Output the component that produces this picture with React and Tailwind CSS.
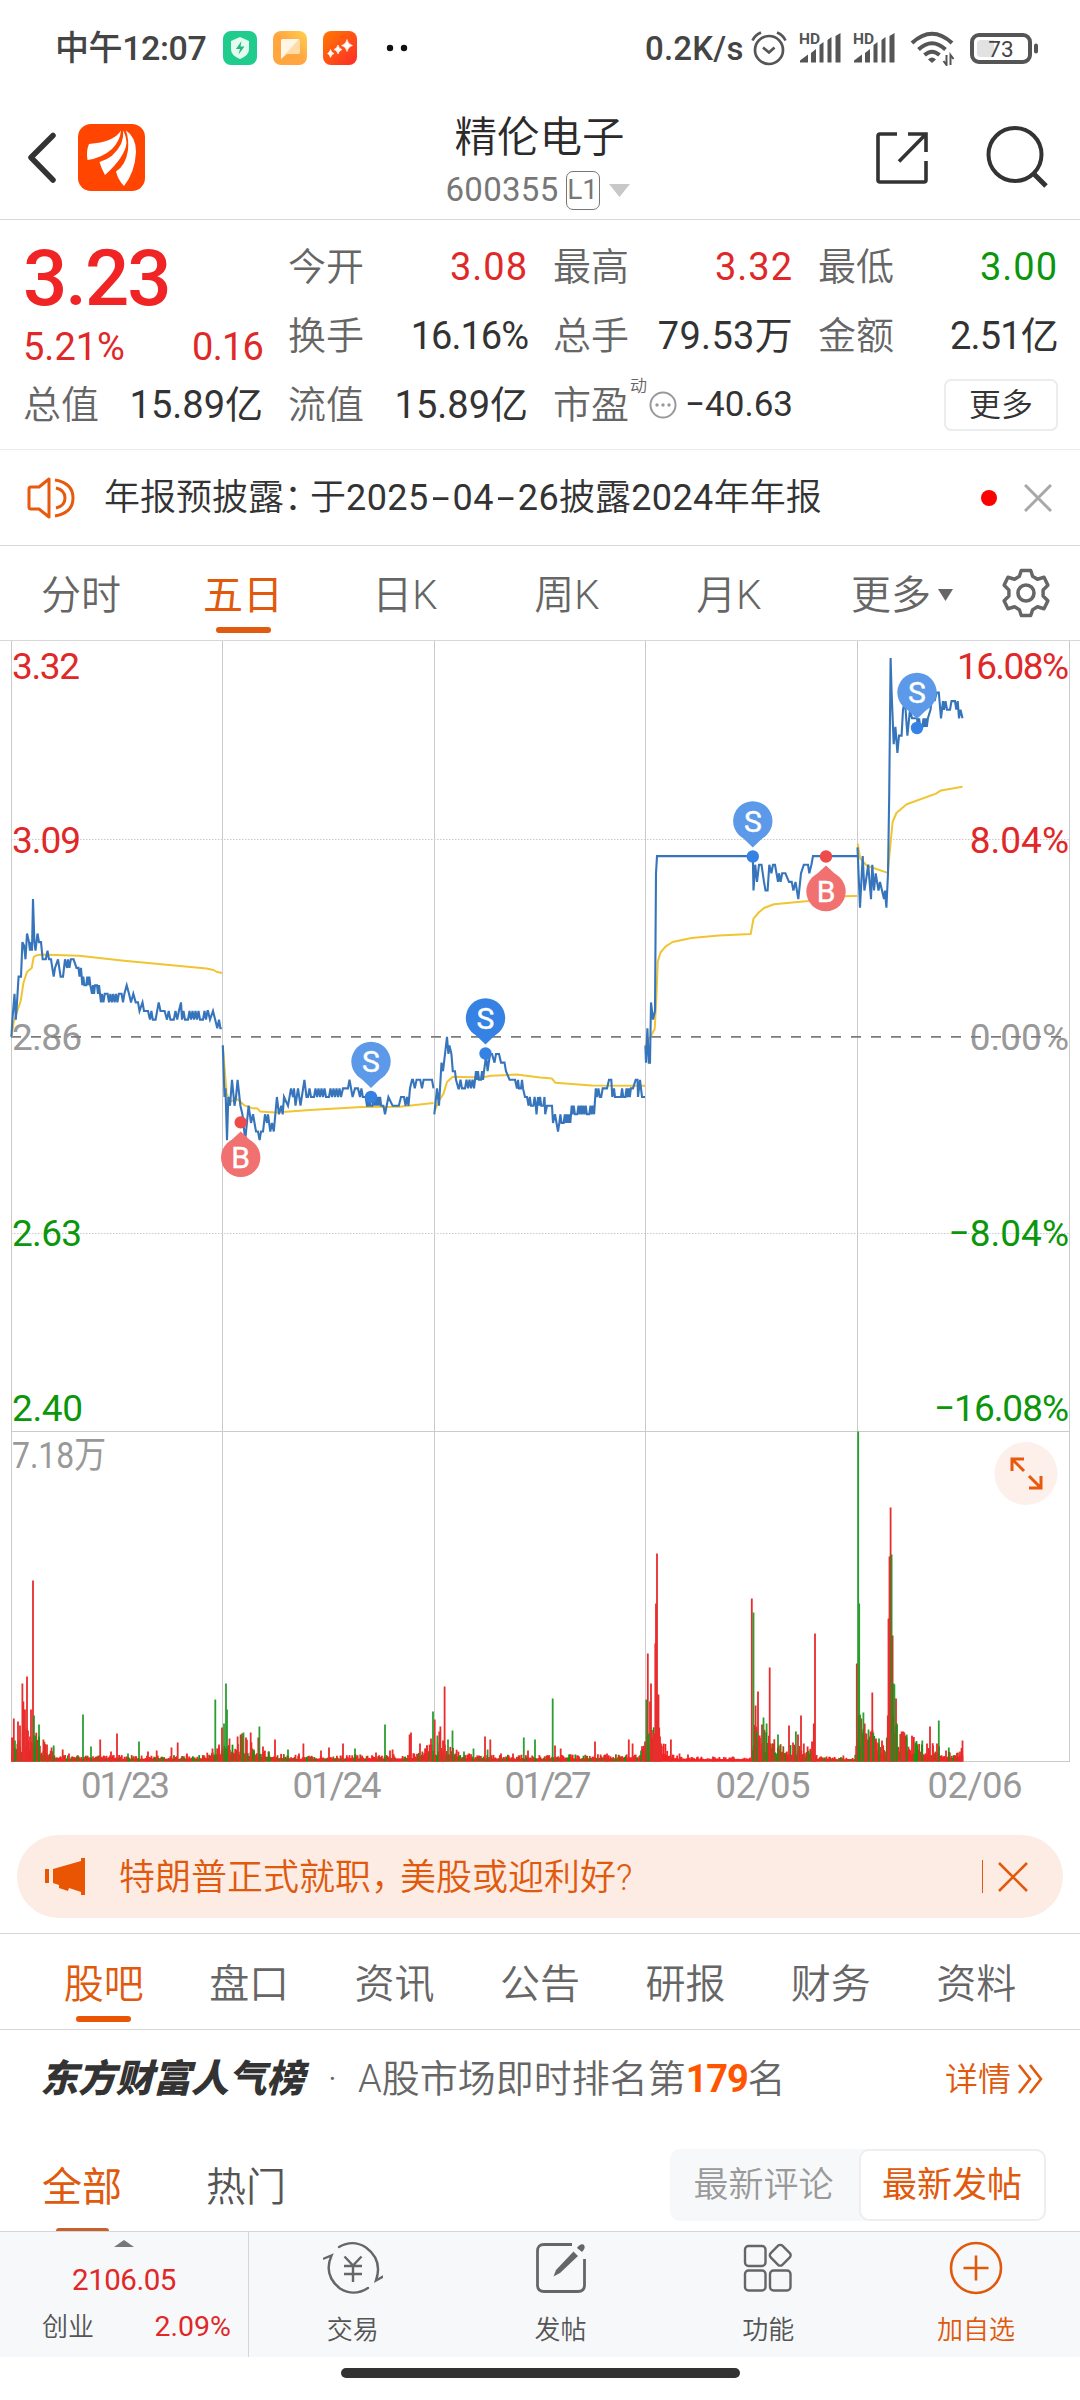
import React from "react";

const RED = "#e02828";
const GREEN = "#0b960b";
const ORANGE = "#e8590c";

const ZERO_Y = 396.8; // y of 2.86
const TICK = 8.607; // height of 0.01
const VOL_BASE = 1121.5;

// A span of fast flicker between two price ticks
const osc = (from, to, a, b, step = 1.4) => {
    const points = [];
    for (let x = from, i = 0; x <= to; x += step, i++) {
        points.push([x, i % 5 === 3 ? a : i % 2 ? b : a]);
    }
    return points;
};

// [x, ticks from 2.86]
const priceDays = [
    [
        [11.4, 0], [12.4, 2], [14.5, 5], [15.8, 2], [17, 4], [18.6, 7], [21, 7], [22.4, 11], [24, 10.6], [25.5, 9],
        [27, 12], [29, 11], [30, 10], [31.3, 11], [32, 10], [33, 16], [34.4, 11], [35.5, 10], [37.5, 12], [39, 11],
        [41, 11], [42.7, 9], [45.8, 9], [47.5, 10], [49, 9], [51, 9], [52.3, 8], [53.7, 7], [55, 8], [58, 9],
        [60.6, 7], [63, 7], [65, 9], [67, 8], ...osc(68, 75, 9, 8), [76.5, 8], [78.5, 8], [79.5, 7], [81, 8],
        ...osc(82.3, 90.5, 6, 7, 1), [92, 5], ...osc(93, 99.5, 6, 5, 1), [101, 4], ...osc(102, 125, 5, 4), [126.7, 6],
        [129, 5], [131, 4], [133.3, 5], [135.7, 4], [138, 4], [139.5, 3], [142.5, 4], [144, 3], [148, 3],
        ...osc(150, 156, 2, 3), [158.7, 4], [160.5, 3], [164.6, 3], ...osc(167, 180, 2, 3, 1.7), [181, 4],
        ...osc(182, 208, 2, 3, 1.5), [208, 3], [210, 2], [213, 3], [217.3, 1], [219, 2], [220.4, 1], [221.8, 1],
    ],
    [
        [222.8, -1], [224.5, -7], [225.5, -6], [227, -12], [228.3, -7], [230, -8], [232, -5], [234.5, -8],
        [236, -7], [237.6, -5], [240.4, -8], [242.4, -9], [245.2, -12], [248.6, -8], [251, -10], [253, -9],
        [256, -11], [258, -11], [259.6, -12], [261, -11], [263, -11], [265, -9], [267, -10], [268, -9],
        [270.3, -11], [272, -10], [273.8, -11], [276.9, -7], [279, -9], [281.3, -8], [282.7, -9], [284, -7],
        [288, -8], [291, -6], [293, -7], [294, -6], [295.5, -8], [298, -6], [300.5, -8], [304.4, -5], [306.5, -7],
        ...osc(308, 342, -7, -6, 1.5), [343, -6], [348, -6], [349.5, -5], [352.6, -7], [355, -6], [358, -6],
        ...osc(360, 366, -7, -6), [367, -8], ...osc(368, 384, -8, -7, 1.1), [385, -9], [388.4, -7], [392.6, -8],
        [398.8, -8], [401, -7], [404, -7], [405.6, -8], [407, -7], [408.5, -8], [410, -6], [412, -5],
        ...osc(413, 423, -5, -6, 1.8), [423.6, -5], [432, -5], [433.5, -6],
    ],
    [
        [434.3, -9], [437, -6], [439, -8], [441.5, -3], [443, -4], [445, -2], [447, 0], [448.4, -2], [449.4, -1],
        [451.4, -2], [452.8, -4], [455, -4], [456, -5], [458.4, -6], ...osc(459, 475, -6, -5, 1.5), [476, -4],
        ...osc(477, 484, -5, -4, 1), [485.2, -3], [486, -2], [487.6, -4], [490, -2], [492, -2], [494.5, -3],
        [496, -2], [499, -2], [501, -3], [503, -3], [504.5, -3], [506, -4], [509.6, -5], [515, -5],
        ...osc(517, 523, -6, -5, 1), [525, -7], [527, -7], ...osc(528.6, 536, -8, -7, 1.2), [536.5, -9], [538, -7],
        ...osc(539, 545, -8, -7, 1.1), [545.2, -9], [547, -8], [552, -8], [553, -10], [555, -9], [558, -11],
        ...osc(559.3, 571, -10, -9, 1.1), [571.7, -8], ...osc(572.5, 594.5, -9, -8, 1.2), [595.8, -6],
        ...osc(597, 602, -7, -6), [602.7, -6], [607, -6], [609, -5], [611.3, -5], [612.3, -7], [614, -6],
        [615, -7], [620, -7], ...osc(621, 632, -7, -6, 1.1), [633, -6], [635.7, -5], [637.5, -5], [638, -7],
        [640, -5], [642, -7], [645, -7],
    ],
    [
        [645.4, -1], [646, -3], [647.4, 1], [648.8, -3], [650, -3], [651, 4], [653, 2], [655, 3], [656, 19],
        [657, 21], [752.8, 21], [753.5, 17], [755.2, 20], [757, 18], [759, 20], [761.5, 20], [764, 18],
        [765.5, 17], [767.6, 17], [769.3, 20], [771.4, 19], [773, 20], [775, 20], [778, 18],
        ...osc(779, 787, 19, 18, 1.6), [789, 18], [791.7, 18], [793.4, 17], [795.5, 18], [798.3, 16], [801, 19],
        [803.8, 20], [808, 20], [809.3, 19], [811.4, 20], [813, 21], [857, 21],
    ],
    [
        [857.5, 22], [860, 15], [862.7, 21], [864.4, 17], [865.8, 18], [868.2, 20], [871, 16], [872.3, 20],
        [874, 17], [875.7, 19], [878.5, 17], [880, 18], [882, 17], [884, 16], [885, 17], [886.4, 15], [888, 19],
        [889.2, 28], [890.6, 44], [891.6, 40], [893.7, 34], [895.4, 36], [897.4, 33], [899, 35], [901.6, 35],
        [903, 38], [905, 39], [907.4, 35], [910, 38], [912, 37], [917, 37], ...osc(918, 928, 36, 37, 1.1),
        [930.5, 38], [932.6, 40], [934.6, 39], [936.7, 40], [938.8, 40], [941, 37], [943, 39],
        ...osc(944, 952, 38, 39, 1.5), [955, 39], [956.3, 38], [957.7, 39], [959, 37], [960.5, 38], [962.5, 37],
    ],
];

const averages = [
    "11.4,396.8 13.8,382 17,372 20.7,361 23.4,343 27,332 31.7,328 33.7,317 36,315.5 41.3,314.5 79,315.7 124,320.7 206.6,328.6 213.5,330 217,332 222,333",
    "222.8,405 226.6,453.6 230,461.4 237.6,459.3 244.5,465.4 251.4,467.9 257.6,468.6 260,471.4 275.5,472.5 310,470 361.6,467 399.4,466.8 433.5,463",
    "434.6,471 439,460.7 443.5,453.6 447,442 452.8,436.8 482,437.5 490.7,435.7 516.5,434.6 540,437.5 552,438.6 555.5,442.8 591.6,445.4 645,445.7",
    "645.5,405 651,395.7 654.7,389 656.4,357 657.8,321.4 660.5,312.5 665.7,306.4 672.6,302 691.5,298 719,295.4 750.7,294 753.5,278.6 758.7,272.5 764,268 774,264.3 808.6,261 819,256.4 857,256",
    "857.8,203.6 860.2,218.6 867,225.7 887.8,232.9 889.5,214 892.6,182 896.4,173 906.7,164.3 936,153.6 941,150.4 962.5,146.8",
];

const redBars = [
    [12, 24], [13.8, 43], [18, 40], [20, 36], [22.4, 78], [23.4, 60], [25, 52], [27, 85], [28, 31], [31, 52],
    [33, 181], [43.4, 22], [47, 17], [51.6, 14], [62.7, 12], [69, 8], [100.2, 22], [111, 10], [117, 28], [148, 10],
    [156.7, 11], [171.5, 14], [177.7, 19], [187, 8], [212.5, 13], [219, 17], [222, 34], [229.5, 23], [237.6, 25],
    [242, 28], [246, 24], [250.7, 29], [258.3, 24], [263, 15], [275, 22], [299, 8], [303.4, 18], [321, 11],
    [329, 14], [343, 18], [376, 9], [390, 11], [392.6, 12], [409.6, 27], [411, 29], [420, 18], [427, 16],
    [431, 23], [434.7, 42], [439.3, 30], [440.4, 35], [443, 21], [444.6, 75], [485, 25], [490.3, 22], [501, 8],
    [513, 8], [528, 11], [555, 16], [560.7, 13], [595, 20], [607, 8], [628.8, 22], [632.6, 18], [645, 20],
    [647.8, 108], [650, 60], [651, 78], [653.6, 28], [655.3, 118], [656, 158], [657, 208], [658.5, 67],
    [659.2, 34], [660, 25], [661, 18], [670.9, 22], [679.5, 8], [688, 7], [713, 5], [733, 5], [751.8, 163],
    [755.6, 56], [758, 70], [759.7, 26], [762, 37], [769.7, 94], [789, 36], [793, 19], [798, 27], [801, 46],
    [803.8, 18], [812, 20], [813.8, 38], [815, 128], [826.5, 5], [843.4, 6], [856.8, 98], [861.3, 43],
    [864.7, 38], [866.4, 28], [870.6, 30], [872.3, 69], [876, 23], [882, 21], [887.8, 46], [888.5, 143],
    [889.5, 205], [890.6, 254], [892.6, 126], [896, 63], [901.6, 30], [903.3, 30], [904.3, 29], [927, 18],
    [930, 35], [933, 16], [937, 18], [946, 11], [960, 10], [962.5, 21],
];

const greenBars = [
    [15, 21], [34, 46], [35.5, 26], [39, 37], [53.7, 16], [83, 47], [91, 15], [128, 8], [139, 20], [215.3, 62],
    [224, 38], [226, 78], [227, 52], [243.5, 29], [254, 12], [259.4, 35], [269, 10], [288, 12], [355, 13],
    [385, 37], [433, 50], [437.4, 26], [448, 22], [452.5, 31], [464, 10], [473.5, 13], [487.6, 12], [523.8, 24],
    [535, 22], [552.7, 63], [641, 11], [646.4, 62], [648.8, 28], [753.5, 149], [756.6, 30], [763.5, 44],
    [766.6, 38], [778, 27], [795.9, 30], [858.2, 330], [859.2, 158], [860.2, 47], [863.4, 49], [868.5, 32],
    [873.3, 29], [879, 23], [891.6, 207], [893.7, 78], [894.4, 77], [897, 38], [906.7, 27], [915.4, 19],
    [922.3, 21], [938.8, 41], [948.8, 14],
];

// Upper bound of the small bars along the day
const envelope = [
    [12, 18], [20, 28], [30, 28], [40, 18], [50, 11], [60, 6], [75, 4], [200, 4], [212, 9], [222, 15], [235, 24],
    [250, 15], [265, 9], [280, 6], [300, 4], [405, 5], [420, 9], [434, 16], [450, 18], [458, 7], [480, 4],
    [625, 5], [640, 9], [650, 28], [660, 28], [666, 12], [672, 5], [680, 3], [751, 2], [753, 30], [765, 30],
    [775, 17], [790, 12], [805, 13], [815, 11], [817, 3], [855, 2], [858, 36], [870, 28], [886, 16], [889, 44],
    [898, 28], [910, 22], [925, 16], [940, 13], [945, 7], [963, 10],
];

const envelopeAt = (x) => {
    for (let i = 1; i < envelope.length; i++) {
        const [x1, h1] = envelope[i];
        if (x <= x1) {
            const [x0, h0] = envelope[i - 1];
            return h0 + ((h1 - h0) * (x - x0)) / (x1 - x0);
        }
    }
    return 0;
};

const smallBars = [];
for (let i = 0, x = 12; x < 963; i++, x += 0.9) {
    const noise = Math.abs(Math.sin(i * 12.9898) * 43758.5453) % 1;
    const pick = Math.abs(Math.sin(i * 4.137) * 9631.17) % 1;
    const onlyRed = x > 658 && x < 751;
    const color = onlyRed || pick < 0.66 ? "#f42323" : pick < 0.8 ? "#0a9a0a" : "#8a5a12";
    smallBars.push({ x, h: 1.5 + noise * noise * envelopeAt(x) + envelopeAt(x) * 0.26, color });
}

const barsPath = (bars) => bars.map(([x, h]) => `M${x} ${VOL_BASE}v${-h}`).join("");
const toPoints = (day) => day.map(([x, t]) => `${x.toFixed(1)},${(ZERO_Y - t * TICK).toFixed(1)}`).join(" ");

const trades = [
    { type: "B", x: 240.7, y: 482.4 },
    { type: "S", x: 371, y: 457, faded: true },
    { type: "S", x: 485.5, y: 413.5 },
    { type: "S", x: 752.8, y: 216.5, faded: true },
    { type: "B", x: 826, y: 216.5 },
    { type: "S", x: 917, y: 88, faded: true },
];

const Marker = ({ type, x, y, faded }) => {
    const sell = type === "S";
    const cy = sell ? y - 35.5 : y + 35;
    const tip = sell ? y - 9 : y + 9;
    const side = sell ? cy + 13 : cy - 13;
    const fill = sell ? (faded ? "#5c99e8" : "#3682e4") : "#f17070";
    return (
        <g>
            <circle cx={x} cy={y} r="6.2" fill={sell ? "#3682e4" : "#ee4b4b"} />
            <path d={`M${x - 14} ${side}L${x} ${tip}L${x + 14} ${side}Z`} fill={fill} />
            <circle cx={x} cy={cy} r="19.7" fill={fill} />
            <text x={x} y={cy + 10.5} textAnchor="middle" fontSize="30" fontWeight="400" stroke="#fff" strokeWidth="0.4" fill="#fff">{type}</text>
        </g>
    );
};

const StockChart = () => (
    <svg className="-mt-px block font-normal" width="1080" height="1172" viewBox="0 0 1080 1172">
        <g stroke="#cbcbcb" strokeWidth="1" fill="none">
            <path d="M11.5 1V1121M222.5 1V1121M434.5 1V1121M645.5 1V1121M857.5 1V1121M1069.5 1V1121" />
            <path d="M11 791.5H1070M11 1121.5H1070" />
            <path d="M11 199.5H1070M11 593.5H1070" strokeDasharray="1.5 1.5" />
        </g>

        {smallBars.map((b, i) => (
            <rect key={i} x={b.x - 0.9} y={VOL_BASE - b.h} width="1.8" height={b.h} fill={b.color} />
        ))}
        <path d={barsPath(redBars)} stroke="#e92c2c" strokeWidth="1.8" />
        <path d={barsPath(greenBars)} stroke="#14931a" strokeWidth="1.8" strokeOpacity="0.9" />

        <g fontSize="37">
            <text x="12" y="39" textLength="68" fill={RED}>3.32</text>
            <text x="12" y="213" textLength="69" fill={RED}>3.09</text>
            <text x="12" y="410" textLength="70" fill="#999">2.86</text>
            <text x="12" y="606" textLength="70" fill={GREEN}>2.63</text>
            <text x="12" y="781" textLength="71" fill={GREEN}>2.40</text>
            <text x="12" y="828" textLength="94" lengthAdjust="spacingAndGlyphs" fill="#999">7.18万</text>
        </g>
        <g fontSize="37" textAnchor="end">
            <text x="1069" y="39" textLength="112" fill={RED}>16.08%</text>
            <text x="1069" y="213" fill={RED}>8.04%</text>
            <text x="1069" y="410" fill="#999">0.00%</text>
            <text x="1069" y="606" fill={GREEN}>−8.04%</text>
            <text x="1069" y="781" textLength="135" fill={GREEN}>−16.08%</text>
        </g>
        <path d={`M11 ${ZERO_Y}H1070`} stroke="#7c7c7c" strokeWidth="1.7" strokeDasharray="10 10" />

        {averages.map((points, i) => (
            <polyline key={i} points={points} fill="none" stroke="#f0c531" strokeWidth="2" strokeLinejoin="round" />
        ))}
        {priceDays.map((day, i) => (
            <polyline key={i} points={toPoints(day)} fill="none" stroke="#3674bb" strokeWidth="2.1" />
        ))}
        {trades.map((t, i) => <Marker key={i} {...t} />)}

        <circle cx="1026" cy="833.5" r="31.5" fill="#fdf0ea" />
        <path d="M1012 831v-12h12M1013 820l11 11M1041 836v12h-12M1040 847l-11-11" fill="none" stroke={ORANGE} strokeWidth="3" />

        <g fontSize="36.5" fill="#999" textAnchor="middle">
            <text x="125.5" y="1158" textLength="89">01/23</text>
            <text x="337" y="1158" textLength="89">01/24</text>
            <text x="548" y="1158" textLength="87">01/27</text>
            <text x="763" y="1158" textLength="95">02/05</text>
            <text x="975" y="1158" textLength="95">02/06</text>
        </g>
    </svg>
);

const Signal = () => (
    <svg width="43" height="44" viewBox="0 -5 43 44" fill="#555">
        <text x="0" y="13" fontSize="15.500" fontWeight="700">HD</text>
        <path d="M1 31.500v-2l8-6v8zM12 31.500V22l5-4v13.500zM20.500 31.500V14l4-3v20.500zM28.500 31.500V9l4-3v25.500zM36.500 31.500V5l5-3v29.500z" />
    </svg>
);

const StatusBar = () => (
    <div className="flex h-24 items-center pr-[41px] pl-[55px] text-[#444]">
        <span className="w-[153px] text-[34px] leading-none font-medium tracking-[-0.4px] whitespace-nowrap">中午12:07</span>
        <svg className="ml-[15px]" width="185" height="34" viewBox="0 0 185 34">
            <defs>
                <linearGradient id="note" x1="0" y1="1" x2="1" y2="0">
                    <stop offset="0.5" stopColor="#ffa640" />
                    <stop offset="1" stopColor="#ffd050" />
                </linearGradient>
                <linearGradient id="spark" x1="0" y1="0" x2="1" y2="1">
                    <stop offset="0" stopColor="#ff7a00" />
                    <stop offset="1" stopColor="#ff2a2a" />
                </linearGradient>
            </defs>
            <rect width="34" height="34" rx="8" fill="#1fcc8d" />
            <path d="M17 6l9 4v8c0 5-4 8-9 10-5-2-9-5-9-10v-8z" fill="#e4fbf0" />
            <path d="M18.500 10l-5.500 8h4l-1.500 5.500 6-8h-4z" fill="#1fb880" />
            <rect x="50" width="34" height="34" rx="8" fill="url(#note)" />
            <path d="M58 28V10q0-2 2-2h15q2 0 2 2v11q0 2-2 2H64z" fill="#ffdca8" />
            <path d="M58 28V10q0-2 2-2h16z" fill="#fff6e6" />
            <rect x="100" width="34" height="34" rx="8" fill="url(#spark)" />
            <path d="M124 8.500q1 5 5.500 6-4.500 1-5.500 6-1-5-5.500-6 4.500-1 5.500-6zM115 14q1 4 4 4.500-3 1-4 4.500-1-4-4-4.500 3-1 4-4.500zM107.500 18.500q1 3.500 3.500 4-2.500.5-3.500 4-1-3.500-3-4 2-.5 3-4z" fill="#fff" stroke="#fff" strokeWidth="0.6" />
            <circle cx="167" cy="17" r="3.200" fill="#111" />
            <circle cx="181" cy="17" r="3.200" fill="#111" />
        </svg>
        <span className="ml-auto w-[99px] text-[33px] leading-none font-medium tracking-[0.2px] whitespace-nowrap">0.2K/s</span>
        <svg className="ml-[7px]" width="36" height="36" viewBox="0 0 36 36" fill="none" stroke="#555" strokeWidth="2.700">
            <circle cx="18" cy="20" r="14" />
            <path d="M12 17.500l6 5 5.500-5M1.500 10.500Q4 5 10 2.500M34.500 10.500Q32 5 26 2.500" />
        </svg>
        <div className="ml-[12px]"><Signal /></div>
        <div className="ml-[11px]"><Signal /></div>
        <svg className="ml-[14px]" width="44" height="35" viewBox="0 0 44 35" fill="none" stroke="#555" strokeWidth="4">
            <path d="M2 12Q22-6.500 42 12M8.500 18.500Q22 6 35.500 18.500M14.500 24Q22 17.500 29.500 24" />
            <path d="M22 32l-4-3.500q4-4 8 0z" fill="#555" stroke="none" />
            <path d="M36.500 24v10l-3-4M40.500 34V24l3 4" strokeWidth="2" />
        </svg>
        <svg className="ml-[16px]" width="69" height="31" viewBox="0 0 69 31">
            <rect x="2" y="2" width="58" height="27" rx="7" fill="#fff" stroke="#555" strokeWidth="4" />
            <path d="M11 7h13v17H11q-4 0-4-4v-9q0-4 4-4z" fill="#e2e2e2" />
            <rect x="64" y="10.500" width="4" height="10" rx="2" fill="#555" />
            <text x="31" y="23.500" textAnchor="middle" fontSize="22.500" fontWeight="400" fill="#444">73</text>
        </svg>
    </div>
);

const Header = () => (
    <div className="flex h-[124px] items-start justify-between border-b border-[#d8d8d8] pr-[31px] pl-[26px]">
        <div className="mt-[28px] flex items-center">
            <svg width="32" height="54" viewBox="0 0 32 54" fill="none" stroke="#333" strokeWidth="5.500" strokeLinecap="round" strokeLinejoin="round">
                <path d="M27 4.500L5 26.500 27 49" />
            </svg>
            <svg className="ml-[20px]" width="67" height="67" viewBox="0 0 67 67">
                <rect width="67" height="67" rx="13" fill="#ff4500" />
                <path d="M43 6.500Q36 18 11 20Q8 27 9.500 36Q24 34 34 25Q42 17 43 6.500zM45 6.500Q48 11 48.500 19Q47 33 27 51Q23 44 21.500 38Q36 34 43 20Q46 12 45 6.500zM48 6.500Q58 13 58 28Q57 48 46 62Q40 56 38 47.500Q48 41 50 26Q51 15 48 6.500z" fill="#fff" />
            </svg>
        </div>
        <div className="ml-[58px] flex flex-col items-center">
            <div className="mt-[20px] text-[42.500px] leading-[44px] text-[#2b2b2b]">精伦电子</div>
            <div className="mt-[10px] -ml-[4px] flex items-center text-[33px] leading-[40px] font-normal text-[#777]">
                <span className="tracking-[0.3px]">600355</span>
                <span className="ml-[7px] flex h-[39px] w-[34px] items-center justify-center rounded-[7px] border-[1.5px] border-[#777] text-[28px]">L1</span>
                <svg className="ml-[9px]" width="21" height="13" viewBox="0 0 21 13"><path d="M0 0h21L10.500 13z" fill="#c8c8c8" /></svg>
            </div>
        </div>
        <div className="mt-[29px] flex">
            <svg className="mt-[7px]" width="52" height="52" viewBox="0 0 52 52" fill="none" stroke="#333" strokeWidth="3.600">
                <path d="M21 2H4Q2 2 2 4v44q0 2 2 2h44q2 0 2-2V29M32 2h18v18M49 3L23 29.500" />
            </svg>
            <svg className="ml-[58px]" width="63" height="63" viewBox="0 0 63 63" fill="none" stroke="#333" strokeWidth="4">
                <circle cx="29" cy="29.500" r="26.500" />
                <path d="M47.500 48.500L60 61" strokeWidth="5" />
            </svg>
        </div>
    </div>
);

const Quote = ({ label, value, color = "text-[#333]" }) => (
    <div className="flex items-center justify-between text-[38px] leading-none whitespace-nowrap">
        <span className="text-[#666]">{label}</span>
        <span className={`font-normal ${color}`}>{value}</span>
    </div>
);

const QuotePanel = () => (
    <div className="h-[230px] border-b border-[#ebebeb] pt-[12px] pr-[22px] pl-[23px]">
        <div className="grid auto-rows-[69px] grid-cols-4 gap-x-[25px]">
            <div className="flex items-center pt-[24px] text-[78px] leading-none font-medium tracking-[-2px] text-[#f02424]">3.23</div>
            <Quote label="今开" value="3.08" color="tracking-[1px] text-[#e02828]" />
            <Quote label="最高" value="3.32" color="tracking-[1px] text-[#e02828]" />
            <Quote label="最低" value="3.00" color="tracking-[1px] text-[#0b960b]" />

            <div className="flex items-center justify-between pt-[22px] text-[38px] leading-none font-normal text-[#e02828]">
                <span>5.21%</span>
                <span className="tracking-[-0.8px]">0.16</span>
            </div>
            <Quote label="换手" value="16.16%" color="tracking-[-1px] text-[#333]" />
            <Quote label="总手" value="79.53万" color="tracking-[0.3px] text-[#333]" />
            <Quote label="金额" value="2.51亿" color="tracking-[-0.8px] text-[#333]" />

            <Quote label="总值" value="15.89亿" />
            <Quote label="流值" value="15.89亿" />
            <div className="flex items-center text-[38px] leading-none whitespace-nowrap">
                <span className="text-[#666]">市盈</span>
                <span className="mb-[36px] ml-[1px] text-[17px] text-[#666]">动</span>
                <svg className="ml-[2px]" width="28" height="28" viewBox="0 0 28 28" fill="#999">
                    <circle cx="14" cy="14" r="12.500" fill="none" stroke="#999" strokeWidth="2" />
                    <circle cx="8" cy="14" r="1.700" /><circle cx="14" cy="14" r="1.700" /><circle cx="20" cy="14" r="1.700" />
                </svg>
                <span className="ml-auto text-[35px] font-normal text-[#333]">−40.63</span>
            </div>
            <div className="flex items-center justify-end">
                <button className="h-[52px] w-[114px] rounded-[7px] border-2 border-[#ebecee] text-[32px] leading-none text-[#333]">更多</button>
            </div>
        </div>
    </div>
);

const Dash = () => <span className="inline-block w-[24px] scale-x-[1.8] text-center">-</span>;

const Notice = () => (
    <div className="flex h-24 items-center border-b border-[#d8d8d8] pr-[28px] pl-[27px]">
        <svg width="48" height="42" viewBox="0 0 48 42" fill="none" stroke={ORANGE} strokeWidth="3" strokeLinejoin="round">
            <path d="M22 2v38l-10-8H4q-2 0-2-2V12q0-2 2-2h8z" />
            <path d="M28 3q18 3 18 18T28 39M29 11q9 2 9 10t-9 10" />
        </svg>
        <span className="ml-[29px] text-[36px] leading-none whitespace-nowrap text-[#333]">
            年报预披露<span className="mr-[8px] [font-feature-settings:'halt']">：</span>于<span className="font-normal tracking-[0.4px]">2025<Dash />04<Dash />26</span>披露<span className="font-normal tracking-[0.4px]">2024</span>年年报
        </span>
        <span className="ml-auto h-4 w-4 rounded-full bg-[#fd0000]"></span>
        <svg className="ml-[27px]" width="28" height="28" viewBox="0 0 28 28" stroke="#a8a8a8" strokeWidth="3"><path d="M1 1l26 26M27 1L1 27" /></svg>
    </div>
);

const periods = ["分时", "五日", "日K", "周K", "月K"];

const PeriodTabs = () => (
    <div className="flex h-[95px] border-b border-[#d8d8d8] text-[40px] leading-none text-[#666]">
        {periods.map((p) => (
            <div key={p} className="relative flex w-[162px] items-center justify-center pt-[6px]">
                <span className={p === "五日" ? "font-normal text-[#e0590c]" : ""}>{p}</span>
                {p === "五日" && <span className="absolute bottom-[7px] h-[6px] w-[55px] rounded-full bg-[#e05a10]"></span>}
            </div>
        ))}
        <div className="flex flex-1 items-center pt-[6px] pl-[41px]">
            更多
            <svg className="mb-[3px] ml-[7px]" width="15" height="12" viewBox="0 0 15 12"><path d="M0 0h15L7.500 12z" fill="#666" /></svg>
            <svg className="mb-[7px] ml-[49px]" width="48" height="50" viewBox="0 0 48 50" fill="none" stroke="#666" strokeWidth="3.600" strokeLinejoin="round">
                <path d="M19 2h10l2 6 5 3 7-2 4 8-5 5v6l5 5-4 8-7-2-5 3-2 6H19l-2-6-5-3-7 2-4-8 5-5v-6l-5-5 4-8 7 2 5-3z" transform="translate(1.200 .5) scale(.95 .98)" />
                <circle cx="24" cy="25" r="8" />
            </svg>
        </div>
    </div>
);

const Banner = () => (
    <div className="mx-[17px] mt-[23px] flex h-[83px] items-center rounded-full bg-[#fcece4] pr-[35px] pl-[28px] text-[#e0590c]">
        <svg width="42" height="37" viewBox="0 0 42 37" fill="#ea5504">
            <path d="M0 11h4v14H0zM8 11L36 3V0h4v37h-4v-3l-12-4-1 3-9-3v-3l-6-2z" />
        </svg>
        <span className="ml-[32px] pt-[2px] text-[36px] leading-none">特朗普正式就职<span className="mr-[11px] [font-feature-settings:'halt']">，</span>美股或迎利好?</span>
        <span className="ml-auto h-[33px] w-px bg-[#e0590c]"></span>
        <svg className="ml-[15px]" width="30" height="30" viewBox="0 0 30 30" stroke="#e0590c" strokeWidth="2.600"><path d="M1 1l28 28M29 1L1 29" /></svg>
    </div>
);

const sections = ["股吧", "盘口", "资讯", "公告", "研报", "财务", "资料"];

const SectionTabs = () => (
    <div className="mt-[15px] flex h-[97px] border-y border-[#d8d8d8] px-[31px] text-[40px] leading-none text-[#666]">
        {sections.map((s) => (
            <div key={s} className="relative flex flex-1 items-center justify-center pt-[6px]">
                <span className={s === "股吧" ? "text-[#e0590c]" : ""}>{s}</span>
                {s === "股吧" && <span className="absolute bottom-[7px] h-[6px] w-[55px] rounded-full bg-[#ea5504]"></span>}
            </div>
        ))}
    </div>
);

const RankRow = () => (
    <div className="flex h-[100px] items-center pr-[36px] pb-[2px] pl-[40px] text-[38px] leading-none whitespace-nowrap">
        <span className="w-[267px] text-[38px] font-black tracking-[-0.3px] text-[#333] italic">东方财富人气榜</span>
        <span className="ml-[18px] w-[15px] text-center text-[#666]">·</span>
        <span className="ml-[18px] text-[#666]">A股市场即时排名第</span>
        <span className="font-bold tracking-[-1.2px] text-[#ff5500]">179</span>
        <span className="text-[#666]">名</span>
        <span className="ml-auto text-[33px] text-[#e0590c]">详情</span>
        <svg className="ml-[6px]" width="27" height="30" viewBox="0 0 27 30" fill="none" stroke="#e0590c" strokeWidth="2.600">
            <path d="M2 1l11 14L2 29M13 1l11 14-11 14" />
        </svg>
    </div>
);

const FeedTabs = () => (
    <div className="flex h-[101px] items-start justify-between pr-[34px] pl-[42px]">
        <div className="flex gap-[84px] text-[40px] leading-none text-[#555]">
            <div className="relative mt-[38px] h-[63px] font-normal text-[#e0590c]">
                全部
                <span className="absolute bottom-0 left-[14px] h-[3px] w-[53px] rounded-t-full bg-[#c8602c]"></span>
            </div>
            <div className="mt-[38px]">热门</div>
        </div>
        <div className="mt-[19px] flex h-[72px] w-[376px] rounded-[10px] bg-[#f7f8fa] text-[35px] leading-none">
            <div className="flex flex-1 items-center justify-center pr-[2px] text-[#999]">最新评论</div>
            <div className="flex w-[187px] items-center justify-center rounded-[10px] border-2 border-[#eeeeef] bg-white pr-[1px] font-normal text-[#e0590c]">最新发帖</div>
        </div>
    </div>
);

const TradeIcon = () => (
    <svg width="60" height="54" viewBox="0 0 60 54" fill="none" stroke="#666" strokeWidth="2.400" strokeLinecap="round">
        <path d="M16 6Q30-2 43 6.500Q60 19 53 39.500l7-4M45 47Q31 56 17 47.500Q0 34 8.500 14.500l-7.500 3" />
        <path d="M21.500 15.500l8.500 9 8.500-9M30 24.500V41M21 25h18M21 33h18" strokeLinecap="butt" />
    </svg>
);

const PostIcon = () => (
    <svg width="52" height="52" viewBox="0 0 52 52" fill="none" stroke="#666" strokeWidth="2.800">
        <path d="M37 2.500H9q-6.500 0-6.500 6.500v34q0 6.500 6.500 6.500h34q6.500 0 6.500-6.500V17" />
        <path d="M38.500 9.500l4.500 4.500L25 31l-6.500 3.500L21 28zM42 6q3-4.500 6.500-3.500 3 3-1.500 7.500z" fill="#666" stroke="none" />
    </svg>
);

const MenuIcon = () => (
    <svg width="50" height="50" viewBox="0 0 50 50" fill="none" stroke="#666" strokeWidth="2.400">
        <rect x="2" y="3" width="20.500" height="20" rx="3.500" />
        <rect x="2" y="27.500" width="20.500" height="20" rx="3.500" />
        <rect x="27" y="27.500" width="20.500" height="20" rx="3.500" />
        <rect x="29" y="4" width="16.500" height="16.500" rx="3" transform="rotate(45 37.250 12.250)" />
    </svg>
);

const AddIcon = () => (
    <svg width="54" height="54" viewBox="0 0 54 54" fill="none" stroke="#e0590c" strokeWidth="2.600">
        <circle cx="27" cy="27" r="25" />
        <path d="M14.500 27h25M27 14.500v25" />
    </svg>
);

const actions = [
    { label: "交易", icon: <TradeIcon /> },
    { label: "发帖", icon: <PostIcon /> },
    { label: "功能", icon: <MenuIcon /> },
    { label: "加自选", icon: <AddIcon />, active: true },
];

const BottomBar = () => (
    <div className="flex h-[126px] border-t border-[#d4d6d8] bg-[#f7f8fa]">
        <div className="flex w-[249px] flex-col border-r border-[#d4d6d8] pt-[8px]">
            <svg className="ml-[114px]" width="20" height="7" viewBox="0 0 20 7"><path d="M0 7L10 0l10 7z" fill="#777" /></svg>
            <div className="mt-[18px] text-center text-[29.500px] leading-[30px] font-normal tracking-[-0.5px] text-[#e02828]">2106.05</div>
            <div className="mt-[17px] flex items-center justify-between pr-[17px] pl-[42px] text-[26px] leading-[30px] text-[#555]">
                创业
                <span className="text-[28.500px] font-normal text-[#e02828]">2.09%</span>
            </div>
        </div>
        {actions.map((a) => (
            <div key={a.label} className="flex flex-1 flex-col items-center pt-[9px]">
                <div className="flex h-[54px] items-center">{a.icon}</div>
                <span className={`mt-[21px] text-[26px] leading-[28px] ${a.active ? "text-[#e0590c]" : "text-[#555]"}`}>{a.label}</span>
            </div>
        ))}
    </div>
);

export default function App() {
    return (
        <div className="flex h-[2400px] w-[1080px] flex-col overflow-hidden bg-white font-[Roboto,'Noto_Sans_CJK_SC',sans-serif] font-[350]">
            <StatusBar />
            <Header />
            <QuotePanel />
            <Notice />
            <PeriodTabs />
            <StockChart />
            <Banner />
            <SectionTabs />
            <RankRow />
            <FeedTabs />
            <BottomBar />
            <div className="mx-auto mt-[11px] h-[10px] w-[399px] rounded-full bg-[#333]"></div>
        </div>
    );
}
